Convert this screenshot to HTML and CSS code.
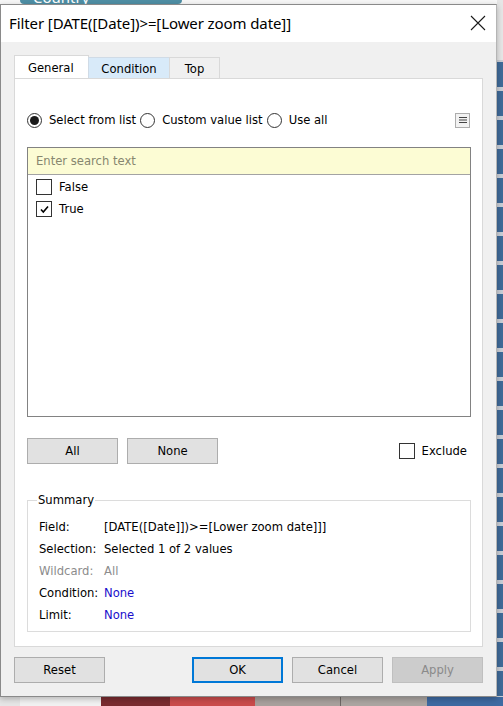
FILE: index.html
```html
<!DOCTYPE html>
<html>
<head>
<meta charset="utf-8">
<link rel="stylesheet" href="styles.css">
</head>
<body>
<div class="screen">
  <div class="top-strip"><div class="pill"><span class="pill-text">Country</span></div></div>
  <div class="top-right"></div>
  <div class="dialog">
    <div class="titlebar">
      <span class="title">Filter [DATE([Date])&gt;=[Lower zoom date]]</span>
      <svg class="close" width="16" height="16" viewBox="0 0 16 16"><path d="M1 1 L15 15 M15 1 L1 15" stroke="#1a1a1a" stroke-width="1.1" fill="none"/></svg>
    </div>
    <div class="body">
      <div class="tabs">
        <div class="tab active">General</div>
        <div class="tab hover">Condition</div>
        <div class="tab">Top</div>
      </div>
      <div class="panel">
        <div class="radio-row">
          <label class="radio"><span class="dot on"></span>Select from list</label>
          <label class="radio"><span class="dot"></span>Custom value list</label>
          <label class="radio"><span class="dot"></span>Use all</label>
          <span class="menu-btn"><svg width="8" height="8" viewBox="0 0 8 8"><path d="M0 1.5H8M0 4H8M0 6.5H8" stroke="#444" stroke-width="1.2"/></svg></span>
        </div>
        <div class="listbox">
          <div class="search">Enter search text</div>
          <div class="item"><span class="cb"></span>False</div>
          <div class="item"><span class="cb"><svg width="11" height="11" viewBox="0 0 11 11"><path d="M2 5.5 L4.3 8 L9 2.5" stroke="#000" stroke-width="1.6" fill="none"/></svg></span>True</div>
        </div>
        <div class="btn-row">
          <button class="btn">All</button>
          <button class="btn">None</button>
          <label class="exclude"><span class="cb"></span>Exclude</label>
        </div>
        <fieldset class="summary">
          <legend>Summary</legend>
          <div class="row"><span class="k">Field:</span><span>[DATE([Date]])&gt;=[Lower zoom date]]]</span></div>
          <div class="row"><span class="k">Selection:</span><span>Selected 1 of 2 values</span></div>
          <div class="row muted"><span class="k">Wildcard:</span><span>All</span></div>
          <div class="row"><span class="k">Condition:</span><span class="link">None</span></div>
          <div class="row"><span class="k">Limit:</span><span class="link">None</span></div>
        </fieldset>
      </div>
      <div class="footer">
        <button class="btn">Reset</button>
        <span class="spacer"></span>
        <button class="btn default">OK</button>
        <button class="btn">Cancel</button>
        <button class="btn disabled">Apply</button>
      </div>
    </div>
  </div>
  <div class="side-strip"></div>
  <div class="bottom-strip">
    <span class="seg s1"></span><span class="seg s2"></span><span class="seg s3"></span><span class="seg s4"></span><span class="seg s5"></span><span class="seg s6"></span><span class="seg s7"></span>
  </div>
</div>
</body>
</html>
```
FILE: styles.css
```css
* { box-sizing: border-box; }
html, body { margin: 0; padding: 0; }
body {
  width: 503px; height: 706px; overflow: hidden;
  background: #f2f2f2;
  font-family: "DejaVu Sans", sans-serif;
  font-size: 11.6px; color: #000;
}
.screen {
  display: grid;
  grid-template-columns: 497px 6px;
  grid-template-rows: 4px 693px 9px;
  width: 503px; height: 706px;
}
.top-strip { grid-column: 1; grid-row: 1; background: #f7f7f7; padding-left: 20px; overflow: hidden; }
.pill {
  width: 162px; height: 4px; background: #4f8fa5; border-radius: 0 0 10px 10px;
  overflow: hidden; padding-left: 13px;
}
.pill-text {
  display: block; color: #fff; font-family: "Noto Sans", sans-serif;
  font-size: 15px; line-height: 16px; margin-top: -11px;
}
.top-right { grid-column: 2; grid-row: 1; background: #e6e6e6; }
.dialog {
  grid-column: 1; grid-row: 2;
  border: 1px solid #8a8a8a;
  border-right-color: #b5b5b5;
  background: #f0f0f0;
  display: flex; flex-direction: column;
  box-shadow: 0 2px 6px rgba(0,0,0,0.25);
  position: relative; z-index: 1;
}
.titlebar {
  height: 37px; background: #fff;
  display: flex; align-items: center; justify-content: space-between;
  padding: 0 10px 2px 8px;
}
.title {
  font-family: "Noto Sans", sans-serif; font-size: 15px; color: #000;
  letter-spacing: -0.1px;
}
.close { margin-top: 0; }
.body { flex: 1; display: flex; flex-direction: column; padding: 13px 13px 0 13px; }
.tabs { display: flex; height: 23px; align-items: flex-end; }
.tab {
  height: 21px; padding: 2px 14px 0; display: flex; align-items: center;
  border: 1px solid #d9d9d9; border-bottom: none; background: #f0f0f0;
  margin-left: -1px;
}
.tab:first-child { margin-left: 0; }
.tab.active { height: 23px; background: #fff; width: 75px; padding: 1px 0 0 13px; }
.tab.hover { background: #d8eaf9; border-color: #d0dbe6; width: 82px; justify-content: center; }
.tab:last-child { width: 51px; justify-content: center; }
.panel {
  height: 569px; width: 469px; background: #fff; border: 1px solid #d9d9d9;
  padding: 0 12px;
  display: flex; flex-direction: column;
}
.radio-row { display: flex; align-items: center; height: 20px; margin-top: 31px; }
.radio { display: flex; align-items: center; gap: 7px; margin-right: 4px; }
.dot {
  width: 15px; height: 15px; border: 1px solid #333; border-radius: 50%;
  display: inline-flex; align-items: center; justify-content: center; background: #fff;
}
.dot.on::after { content: ""; width: 9px; height: 9px; border-radius: 50%; background: #1a1a1a; }
.menu-btn {
  margin-left: auto; width: 15px; height: 15px; border: 1px solid #adadad; background: #f2f2f2;
  display: inline-flex; align-items: center; justify-content: center; margin-right: 0;
}
.listbox {
  margin-top: 17px; height: 270px; border: 1px solid #828282; width: 444px;
}
.search {
  height: 27px; background: #fcfcd4; border-bottom: 1px solid #a3a3a3;
  color: #87876f; padding-left: 8px; display: flex; align-items: center;
}
.item { height: 22px; display: flex; align-items: center; padding-left: 8px; gap: 7px; }
.item:nth-child(2) { margin-top: 1px; }
.cb {
  width: 16px; height: 16px; border: 1px solid #333; background: #fff;
  display: inline-flex; align-items: center; justify-content: center;
}
.btn-row { display: flex; align-items: center; margin-top: 21px; height: 26px; }
.btn {
  font-family: "DejaVu Sans", sans-serif; font-size: 11.6px; color: #000;
  width: 91px; height: 26px; background: #e1e1e1; border: 1px solid #adadad;
  border-radius: 0; padding: 0;
}
.btn-row .btn + .btn { margin-left: 9px; }
.exclude { margin-left: auto; display: flex; align-items: center; gap: 7px; margin-right: 3px; }
.summary {
  margin: 29px 0 0 0; padding: 9px 11px 0 11px; border: 1px solid #dcdcdc;
  height: 139px; width: 444px;
}
.summary legend { padding: 0 1px; margin-left: -2px; }
.row { display: flex; height: 22px; align-items: center; }
.k { width: 65px; }
.muted { color: #8c8c8c; }
.link { color: #1a0dcc; }
.footer { display: flex; align-items: center; margin-top: 10px; height: 26px; }
.spacer { flex: 1; }
.footer .btn + .btn { margin-left: 9px; }
.btn.default { border: 2px solid #0078d7; }
.btn.disabled { background: #cccccc; border-color: #bfbfbf; color: #8a8a8a; }
.side-strip {
  grid-column: 2; grid-row: 2;
  background:
    linear-gradient(#e6e6e6, #e6e6e6) top / 100% 56px no-repeat,
    repeating-linear-gradient(#3f6a98 0 25px, #c9ced6 25px 29px);
}
.bottom-strip { grid-column: 1 / 3; grid-row: 3; display: flex; }
.seg { height: 100%; }
.s1 { width: 20px; background: #e6e6e6; }
.s2 { width: 81px; background: #f2f2f2; }
.s3 { width: 69px; background: #7a2c30; }
.s4 { width: 85px; background: #cb4c4c; }
.s5 { width: 86px; background: #a9a19d; border-right: 1px solid #6e6866; }
.s6 { width: 86px; background: #aca6a2; }
.s7 { flex: 1; background: #3e6aa2; }
```
